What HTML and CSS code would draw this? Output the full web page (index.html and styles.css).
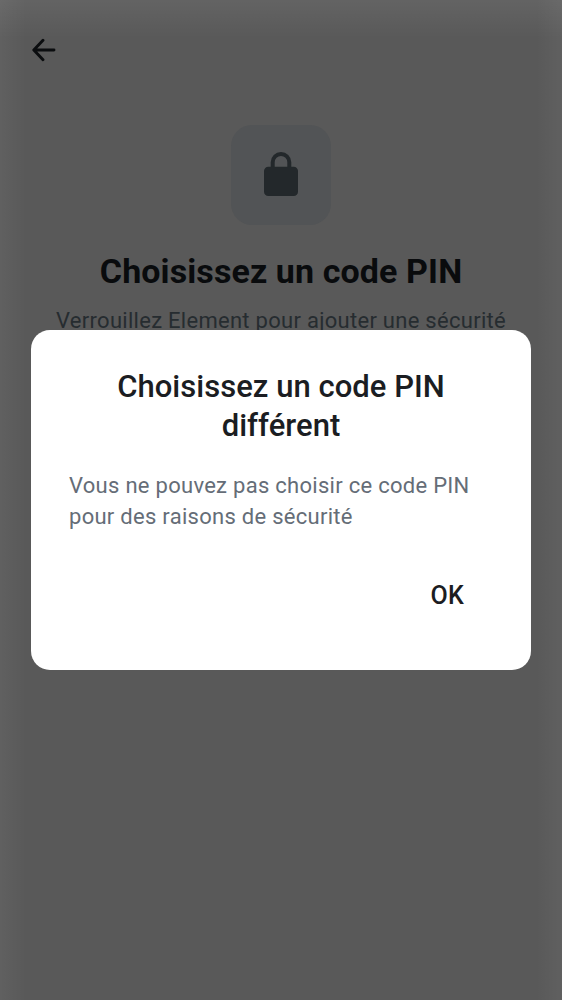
FILE: index.html
```html
<!DOCTYPE html>
<html lang="fr">
<head>
<meta charset="utf-8">
<title>Code PIN</title>
<link rel="stylesheet" href="styles.css">
</head>
<body>
<main class="screen">
  <header class="topbar">
    <svg class="back" viewBox="0 0 24 24"><path d="M11 2.3 1.8 12 11 21.7M2 12H22"/></svg>
  </header>
  <section class="intro">
    <div class="tile">
      <svg class="lock" viewBox="0 0 34 46"><path class="shackle" d="M8.7 18V11.3a8.3 8.3 0 0 1 16.6 0V18"/><rect class="lock-body" y="15.7" width="34" height="29.3" rx="4.3"/></svg>
    </div>
    <h1 class="title">Choisissez un code PIN</h1>
    <p class="subtitle">Verrouillez Element pour ajouter une sécurité</p>
  </section>
</main>
<div class="overlay">
  <section class="dialog" role="dialog">
    <h2 class="dialog-title">Choisissez un code PIN<br>différent</h2>
    <p class="dialog-text">Vous ne pouvez pas choisir ce code PIN<br>pour des raisons de sécurité</p>
    <button class="ok">OK</button>
  </section>
</div>
</body>
</html>
```
FILE: styles.css
```css
* { box-sizing: border-box; margin: 0; }
body { width: 562px; height: 1000px; overflow: hidden; font-family: Roboto, sans-serif; background: #595959; }
.screen {
  height: 1000px;
  background:
    linear-gradient(#ffffff10, #ffffff00 38px),
    linear-gradient(90deg, #ffffff0b, #ffffff00 26px, #ffffff00 536px, #ffffff0b),
    #595959;
}
.topbar { height: 125px; padding: 38px 0 0 32px; }
.back { display: block; width: 24px; height: 24px; fill: none; stroke: #0b0d0f; stroke-width: 2.9; stroke-linecap: round; stroke-linejoin: round; }
.intro { display: flex; flex-direction: column; align-items: center; }
.tile { width: 100px; height: 100px; border-radius: 21px; background: #525456; display: flex; justify-content: center; padding-top: 26px; }
.lock { width: 34px; height: 46px; }
.shackle { fill: none; stroke: #23282b; stroke-width: 4; }
.lock-body { fill: #23282b; }
.title { margin-top: 25px; font-size: 34px; line-height: 42px; letter-spacing: .1px; font-weight: 700; color: #090b0d; white-space: nowrap; }
.subtitle { margin-top: 13px; font-size: 22px; line-height: 32px; letter-spacing: .28px; color: #262c30; white-space: nowrap; }
.overlay { position: absolute; inset: 0; width: 562px; height: 1000px; display: grid; place-items: center; }
.dialog { width: 500px; height: 340px; padding: 37px 38px 0; border-radius: 19px; background: #fff; display: flex; flex-direction: column; }
.dialog-title { font-size: 31px; line-height: 39px; letter-spacing: .03px; font-weight: 500; text-align: center; color: #1b1d22; white-space: nowrap; }
.dialog-text { margin-top: 25px; font-size: 22px; line-height: 31px; letter-spacing: .28px; color: #656d77; white-space: nowrap; }
.ok { align-self: flex-end; margin: 49px 29px 0 0; padding: 0; border: 0; background: none; font: 500 25px/30px Roboto, sans-serif; letter-spacing: .3px; color: #1b1d22; }
```
